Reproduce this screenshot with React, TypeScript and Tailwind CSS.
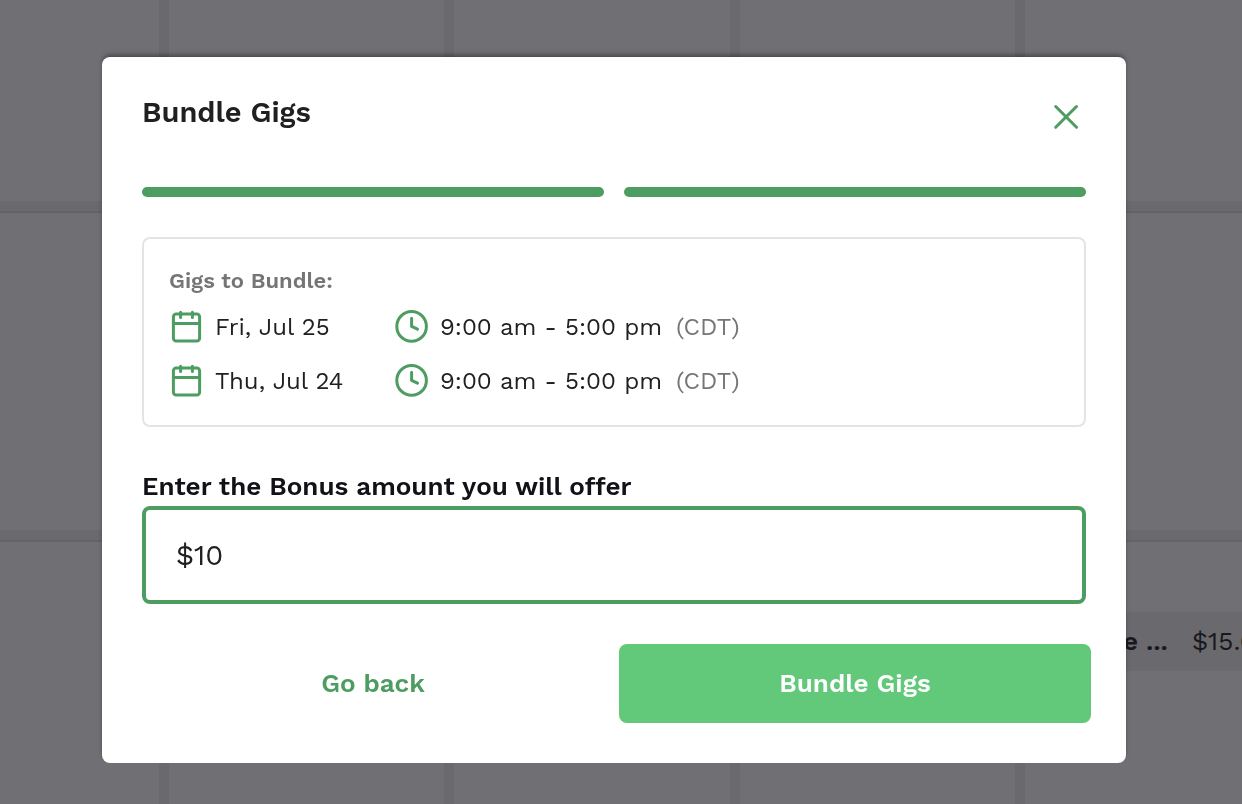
import React, { useState } from "react";

type Gig = {
  date: string;
  time: string;
  zone: string;
};

const gigs: Gig[] = [
  { date: "Fri, Jul 25", time: "9:00 am - 5:00 pm", zone: "(CDT)" },
  { date: "Thu, Jul 24", time: "9:00 am - 5:00 pm", zone: "(CDT)" },
];

const CalendarIcon = () => (
  <svg
    className="size-9 shrink-0"
    viewBox="0 0 36 36"
    fill="none"
    stroke="currentColor"
    strokeWidth="3"
    strokeLinecap="round"
    aria-hidden="true"
  >
    <rect x="4.4" y="5" width="26.2" height="27" rx="2.8" />
    <path d="M4.4 14.5h26.2M11.6 3.2v5.2M23.4 3.2v5.2" />
  </svg>
);

const ClockIcon = () => (
  <svg
    className="size-9 shrink-0"
    viewBox="0 0 36 36"
    fill="none"
    stroke="currentColor"
    strokeWidth="3"
    strokeLinecap="round"
    strokeLinejoin="round"
    aria-hidden="true"
  >
    <circle cx="17.6" cy="17.4" r="14.8" />
    <path d="M17.6 9.3v8.1l5.9 2.8" />
  </svg>
);

const CloseIcon = () => (
  <svg
    className="size-8"
    viewBox="0 0 32 32"
    fill="none"
    stroke="currentColor"
    strokeWidth="3"
    strokeLinecap="round"
    aria-hidden="true"
  >
    <path d="M5.7 5.5l20.8 20.8M26.5 5.5L5.7 26.3" />
  </svg>
);

const WeekRow = ({ children }: { children?: React.ReactNode }) => (
  <div className="grid h-full grid-cols-[159px_repeat(3,1fr)_217px] gap-x-2.5">
    <div className="bg-[#706f74]" />
    <div className="bg-[#706f74]" />
    <div className="bg-[#706f74]" />
    <div className="bg-[#706f74]" />
    <div className="overflow-hidden bg-[#706f74]">{children}</div>
  </div>
);

// Dimmed calendar that stays behind the dialog
const CalendarBackdrop = () => (
  <div className="fixed inset-0 grid grid-rows-[201px_319px_1fr] gap-y-2.5 overflow-hidden bg-[#6a696e]">
    <WeekRow />
    <div className="border-t-2 border-[#636267]">
      <WeekRow />
    </div>
    <div className="border-t-2 border-[#636267]">
      <WeekRow>
        <div className="mt-[70px] flex h-[59px] items-center gap-6 bg-[#6a696e] pl-[98px] text-[26px] whitespace-nowrap text-[#19191d]">
          <span className="font-semibold">e ...</span>
          <span>$15.00</span>
        </div>
      </WeekRow>
    </div>
  </div>
);

const App = () => {
  const [amount, setAmount] = useState<string>("$10");

  return (
    <div className="font-['Work_Sans',Inter,sans-serif] text-[#202020]">
      <CalendarBackdrop />
      <div className="relative flex justify-center pt-[57px] pr-3.5">
        <div
          role="dialog"
          aria-labelledby="bundle-title"
          className="w-full max-w-[1024px] rounded-lg bg-white p-10 shadow-[0_-3px_5px_-1px_rgba(0,0,0,0.4)]"
        >
          <div className="flex items-start justify-between pr-1">
            <h1 id="bundle-title" className="text-[29px] leading-[30px] font-semibold">
              Bundle Gigs
            </h1>
            <button type="button" aria-label="Close" className="mt-1 text-[#4d9d62]">
              <CloseIcon />
            </button>
          </div>

          <div className="mt-[54px] grid grid-cols-2 gap-5">
            <div className="h-2.5 rounded-full bg-[#4d9d62]" />
            <div className="h-2.5 rounded-full bg-[#4d9d62]" />
          </div>

          <div className="mt-10 rounded-lg border-2 border-[#e4e4e4] px-[25px] pt-7 pb-[26px]">
            <h2 className="text-[22px] leading-7 font-semibold text-[#757575]">
              Gigs to Bundle:
            </h2>
            <div className="mt-3.5 flex flex-col gap-[18px]">
              {gigs.map((gig) => (
                <div key={gig.date} className="flex">
                  <div className="flex w-[225px] items-center gap-2.5">
                    <span className="text-[#4d9d62]">
                      <CalendarIcon />
                    </span>
                    <span className="text-2xl">{gig.date}</span>
                  </div>
                  <div className="flex items-center gap-2.5 text-2xl">
                    <span className="text-[#4d9d62]">
                      <ClockIcon />
                    </span>
                    <span>{gig.time}</span>
                    <span className="ml-1 text-[#757575]">{gig.zone}</span>
                  </div>
                </div>
              ))}
            </div>
          </div>

          <label
            htmlFor="bonus"
            className="mt-[43px] block text-[26px] leading-8 font-semibold text-[#121118]"
          >
            Enter the Bonus amount you will offer
          </label>
          <input
            id="bonus"
            type="text"
            value={amount}
            onChange={(e) => setAmount(e.target.value)}
            className="mt-1 block h-[98px] w-full rounded-lg border-4 border-[#4d9d62] bg-white px-[30px] text-[29px] outline-none"
          />

          <div className="-mx-[5px] mt-10 grid grid-cols-2 gap-2.5 text-[26px] font-semibold">
            <button type="button" className="h-[79px] rounded-lg text-[#4d9d62]">
              Go back
            </button>
            <button type="button" className="h-[79px] rounded-lg bg-[#62c97a] text-white">
              Bundle Gigs
            </button>
          </div>
        </div>
      </div>
    </div>
  );
};

export default App;
